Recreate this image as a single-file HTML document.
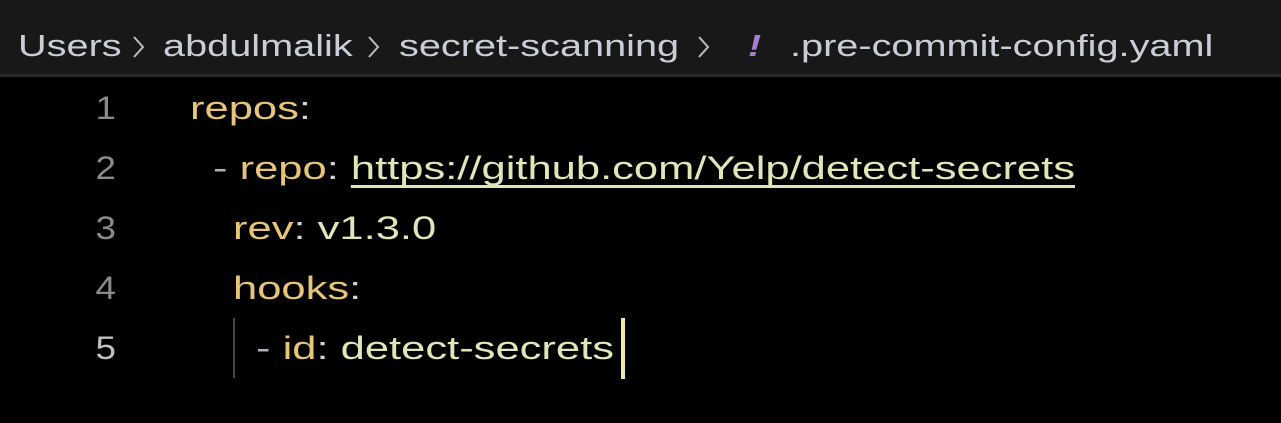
<!DOCTYPE html>
<html><head><style>
html,body{margin:0;padding:0;width:1281px;height:423px;background:#000;overflow:hidden;font-family:"Liberation Sans",sans-serif}
.bc{position:absolute;left:0;top:0;width:1281px;height:74px;background:#181818;border-bottom:3px solid #2b2b2b}
.bc span{position:absolute;top:26px;font-size:31px;color:#c9cdd8;white-space:nowrap;line-height:40px;transform:scaleX(1.28);transform-origin:left}
.ln{position:absolute;left:60px;width:56px;text-align:right;font-size:32px;color:#8a8a8a;line-height:40px;transform:scaleX(1.15);transform-origin:right}
.c{position:absolute;font-size:32px;line-height:40px;white-space:nowrap;color:#dfe6b8;transform:scaleX(1.36);transform-origin:left}
.k{color:#e6c579}.p{color:#cfd3da}.d{color:#a8b0bc}
</style></head><body>
<div class="bc">
<span style="left:18px">Users</span>
<span style="left:163px">abdulmalik</span>
<span style="left:399px">secret-scanning</span>
<span style="left:748px;color:#a87ccf;font-weight:bold;font-style:italic">!</span>
<span style="left:790px">.pre-commit-config.yaml</span>
<svg style="position:absolute;left:0;top:0" width="1281" height="74"><g fill="none" stroke="#b8bcc6" stroke-width="2"><polyline points="134,37 143,47 134,57"/><polyline points="369,37 378,47 369,57"/><polyline points="699,37 708,47 699,57"/></g></svg>
</div>
<div class="ln" style="top:88px">1</div>
<div class="ln" style="top:148px">2</div>
<div class="ln" style="top:208px">3</div>
<div class="ln" style="top:268px">4</div>
<div class="ln" style="top:328px;color:#c0c0c0">5</div>
<div class="c" style="left:190px;top:88px"><span class="k">repos</span><span class="p">:</span></div>
<div class="c" style="left:213px;top:148px"><span class="d">-</span> <span class="k">repo</span><span class="p">:</span> <span style="text-decoration:underline;text-underline-offset:6px;text-decoration-thickness:3px;text-decoration-skip-ink:none">https://github.com/Yelp/detect-secrets</span></div>
<div class="c" style="left:233px;top:208px"><span class="k">rev</span><span class="p">:</span> v1.3.0</div>
<div class="c" style="left:233px;top:268px"><span class="k">hooks</span><span class="p">:</span></div>
<div style="position:absolute;left:233px;top:318px;width:2px;height:60px;background:#444"></div>
<div class="c" style="left:256px;top:328px"><span class="d">-</span> <span class="k">id</span><span class="p">:</span> detect-secrets</div>
<div style="position:absolute;left:621px;top:318px;width:4px;height:61px;background:#efe8a8"></div>
</body></html>
